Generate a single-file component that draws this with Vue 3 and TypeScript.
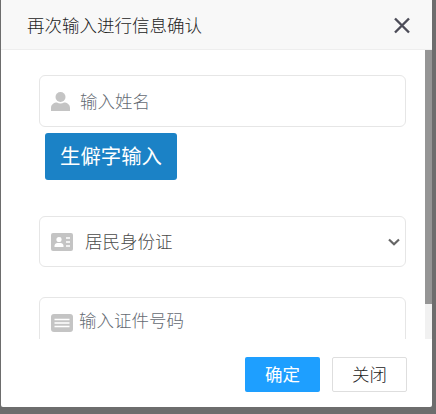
<script setup lang="ts">
import { ref } from "vue";

const name = ref("");
const idNumber = ref("");
const idType = ref("居民身份证");
</script>

<template>
  <div class="backdrop">
    <div class="modal">
      <div class="modal-head">
        <span class="modal-title">再次输入进行信息确认</span>
        <button type="button" class="close-btn" aria-label="close">
          <svg width="18" height="17" viewBox="0 0 18 17" fill="none" stroke="#4c4c58" stroke-width="2.4">
            <path d="M2 1.5 16 15.5M16 1.5 2 15.5" />
          </svg>
        </button>
      </div>

      <div class="modal-body">
        <div class="form">
          <label class="field field-name">
            <svg class="icon icon-user" width="19" height="19" viewBox="0 0 19 19" fill="#c4c4c4">
              <circle cx="9.5" cy="5" r="5" />
              <path d="M0 19v-3c0-3.6 3-5.500 6-5.500 1 .6 2.200.9 3.500.9s2.500-.3 3.500-.9c3 0 6 1.900 6 5.500v3z" />
            </svg>
            <input v-model="name" class="control control-name" placeholder="输入姓名" />
          </label>
          <button type="button" class="rare-btn">生僻字输入</button>

          <label class="field field-select">
            <svg class="icon" width="22" height="18" viewBox="0 0 22 18">
              <rect width="22" height="18" rx="2" fill="#c4c4c4" />
              <circle cx="8" cy="6.500" r="2.600" fill="#fff" />
              <path d="M3.500 14v-1.200c0-1.700 1.500-2.800 2.800-2.800h3.400c1.300 0 2.800 1.100 2.800 2.800V14z" fill="#fff" />
              <path d="M15 5h4M15 9h4M15 13h4" stroke="#fff" stroke-width="1.500" />
            </svg>
            <select v-model="idType" class="control control-select">
              <option>居民身份证</option>
              <option>护照</option>
            </select>
            <svg class="chevron" width="12" height="8" viewBox="0 0 12 8" fill="none" stroke="#666" stroke-width="2.200">
              <path d="M1 1.500 6 6.300l5-4.800" />
            </svg>
          </label>

          <label class="field field-id">
            <svg class="icon" width="22" height="18" viewBox="0 0 22 18">
              <rect width="22" height="18" rx="3" fill="#c4c4c4" />
              <path d="M3.500 5.500h15M3.500 9h15M3.500 12.500h15" stroke="#fff" stroke-width="1.500" />
            </svg>
            <input v-model="idNumber" class="control control-id" placeholder="输入证件号码" />
          </label>
        </div>

        <div class="scrollbar">
          <div class="scrollbar-thumb"></div>
        </div>
      </div>

      <div class="modal-foot">
        <button type="button" class="btn btn-primary">确定</button>
        <button type="button" class="btn btn-plain">关闭</button>
      </div>
    </div>
  </div>
</template>

<style>
html,
body {
  margin: 0;
  background: #6d6d6d;
}
</style>

<style scoped>
.backdrop {
  width: 436px;
  height: 414px;
  padding-left: 1px;
  box-sizing: border-box;
  background: #6d6d6d;
  font-family: "Noto Sans CJK SC", "Liberation Sans", sans-serif;
  overflow: hidden;
}

.modal {
  width: 431px;
  height: 407px;
  display: flex;
  flex-direction: column;
  background: #fff;
  border-radius: 0 0 2px 2px;
}

.modal-head {
  height: 49px;
  flex: none;
  display: flex;
  align-items: center;
  justify-content: space-between;
  padding: 0 21px 0 26px;
  background: #f8f8f8;
  border-bottom: 1px solid #eee;
}

.modal-title {
  font-size: 17.500px;
  font-weight: 300;
  color: #222;
}

.close-btn {
  display: flex;
  padding: 0;
  margin-top: 2px;
  background: none;
  border: 0;
  cursor: pointer;
}

.modal-body {
  height: 289px;
  flex: none;
  display: flex;
  overflow: hidden;
}

.form {
  flex: 1;
  min-width: 0;
  padding: 25px 19px 0 38px;
}

.field {
  display: flex;
  align-items: center;
  box-sizing: border-box;
  height: 52px;
  padding: 0 11px;
  border: 1px solid #e6e6e6;
  border-radius: 6px;
  background: #fff;
}

.field-select {
  height: 51px;
  margin-top: 36px;
}

.field-id {
  margin-top: 30px;
  align-items: flex-start;
  padding-top: 16px;
}

.icon {
  flex: none;
}

.control {
  flex: 1;
  min-width: 0;
  padding: 0;
  border: 0;
  outline: 0;
  background: none;
  font-family: inherit;
  font-size: 17.500px;
  font-weight: 300;
  color: #4a4a4a;
}

.control::placeholder {
  color: #656b73;
  opacity: 1;
}

.control-name {
  margin: -2px 0 0 10px;
}

.control-select {
  margin: -3px 0 0 12px;
  appearance: none;
}

.control-id {
  margin: -6px 0 0 6px;
  line-height: 24px;
}

.chevron {
  flex: none;
  margin-right: -6px;
}

.rare-btn {
  display: block;
  width: 132px;
  height: 47px;
  margin: 6px 0 0 6px;
  padding: 0 0 3px;
  border: 0;
  border-radius: 3px;
  background: #1b82c6;
  color: #fff;
  font-family: inherit;
  font-size: 20.400px;
  font-weight: 400;
  cursor: pointer;
}

.scrollbar {
  width: 7px;
  flex: none;
  background: #f1f1f1;
}

.scrollbar-thumb {
  height: 254px;
  background: #959595;
}

.modal-foot {
  flex: 1;
  display: flex;
  justify-content: flex-end;
  align-items: flex-start;
  gap: 12px;
  padding: 18px 25px 0 0;
}

.btn {
  width: 75px;
  height: 35px;
  padding: 0 0 2px;
  box-sizing: border-box;
  border-radius: 2px;
  font-family: inherit;
  font-size: 17.500px;
  cursor: pointer;
}

.btn-primary {
  border: 0;
  background: #1e9fff;
  color: #fff;
  font-weight: 400;
}

.btn-plain {
  border: 1px solid #dedede;
  background: #fff;
  color: #222;
  font-weight: 300;
}
</style>
